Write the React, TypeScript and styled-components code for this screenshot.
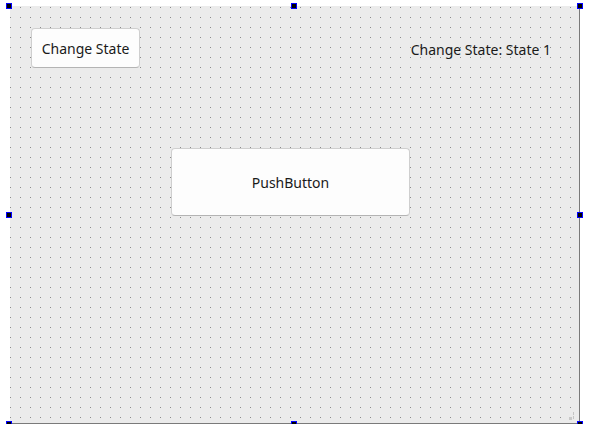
import styled, { createGlobalStyle } from "styled-components";

const GlobalStyle = createGlobalStyle`
  html, body {
    margin: 0;
    padding: 0;
    background: #ffffff;
  }
  body {
    font-family: "Noto Sans", "Open Sans", sans-serif;
  }
`;

type HandleSpot = { left: number; top: number };

// selection handles around the form, relative to the form's corner
const handles: HandleSpot[] = [
  { left: -4, top: -3 },
  { left: 281, top: -3 },
  { left: 567, top: -3 },
  { left: -4, top: 206 },
  { left: 567, top: 206 },
  { left: -4, top: 415 },
  { left: 281, top: 415 },
  { left: 567, top: 415 },
];

export default function App() {
  return (
    <>
      <GlobalStyle />
      <Designer>
        <Form>
          <ChangeButton>Change State</ChangeButton>
          <StateLabel>Change State: State 1</StateLabel>
          <PushButton>PushButton</PushButton>
        </Form>
        <Grip width="8" height="10" viewBox="0 0 8 10">
          <rect x="4" y="0" width="1" height="3" fill="#c4c4c4" />
          <rect x="4" y="4" width="1" height="3" fill="#c4c4c4" />
          <rect x="0" y="5" width="3" height="3" fill="#c8c8c8" />
        </Grip>
        {handles.map((h, i) => (
          <Handle key={i} style={{ left: h.left, top: h.top }} />
        ))}
      </Designer>
    </>
  );
}

const Designer = styled.div`
  position: relative;
  width: 570px;
  height: 418px;
  margin: 6px 0 0 10px;
`;

const Form = styled.div`
  box-sizing: border-box;
  width: 570px;
  height: 418px;
  display: grid;
  grid-template-columns: 21px 109px 31px 239px 1fr;
  grid-template-rows: 22px 40px 80px 68px 1fr;
  background-color: #ebebeb;
  background-image: conic-gradient(at 1px 1px, transparent 75%, #8c8c8c 0);
  background-size: 10px 10px;
  background-position: 0 1px;
  border-right: 1px solid #7a7a7a;
  border-bottom: 1px solid #7a7a7a;
`;

const WidgetButton = styled.button`
  box-sizing: border-box;
  margin: 0;
  padding: 2px 0 0;
  background: #fdfdfd;
  border: 1px solid #cfcfcf;
  border-bottom-color: #b4b4b4;
  border-radius: 4px;
  font-family: "Noto Sans", "Open Sans", sans-serif;
  font-size: 14px;
  color: #1a1a1a;
  line-height: 1;
  display: flex;
  align-items: center;
  justify-content: center;
`;

const ChangeButton = styled(WidgetButton)`
  grid-column: 2;
  grid-row: 2;
`;

const PushButton = styled(WidgetButton)`
  grid-column: 4;
  grid-row: 4;
`;

const StateLabel = styled.div`
  grid-column: 4 / 6;
  grid-row: 2;
  justify-self: end;
  align-self: center;
  padding: 2px 28px 0 0;
  font-size: 14px;
  color: #1a1a1a;
  white-space: nowrap;
`;

const Grip = styled.svg`
  position: absolute;
  right: 3px;
  bottom: 2px;
  display: block;
`;

const Handle = styled.div`
  position: absolute;
  width: 6px;
  height: 6px;
  box-sizing: border-box;
  background: #000000;
  border: 1px solid #0000ff;
`;
